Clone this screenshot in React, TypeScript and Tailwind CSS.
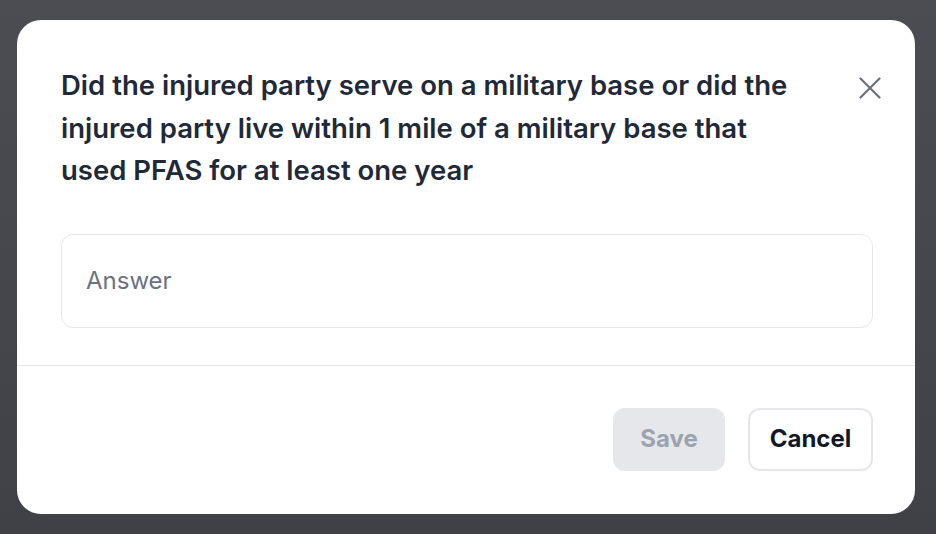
import { X } from "lucide-react";

export default function App() {
  return (
    <div
      className="flex h-[534px] w-[936px] items-start bg-gradient-to-b from-[#4b4d52] to-[#404146] pt-5 pl-[17px]"
      style={{ fontFamily: "Inter, 'Noto Sans', sans-serif" }}
    >
      <div className="w-[898px] overflow-hidden rounded-[24px] bg-white">
        <div className="pl-[44px] pr-[42px] pt-[44px] pb-[37px]">
          <div className="flex items-start justify-between">
            <h2 className="w-[740px] text-[27.5px] leading-[42.5px] font-semibold text-[#1f2937]">
              Did the injured party serve on a military base or did the injured party live within 1 mile of a
              military base that used PFAS for at least one year
            </h2>
            <button className="mt-[5px] mr-[-16px] text-[#6b7280]">
              <X className="h-[38px] w-[38px]" strokeWidth={1.4} />
            </button>
          </div>
          <div className="mt-[42px] flex h-[94px] items-center rounded-[12px] border border-[#e5e7eb] px-[24px]">
            <span className="text-[24px] text-[#6b7280]">Answer</span>
          </div>
        </div>
        <div className="flex justify-end gap-[23px] border-t border-[#e5e7eb] pr-[42px] pt-[42px] pb-[43px]">
          <button className="h-[63px] w-[112px] rounded-[12px] bg-[#e5e7eb] text-[24px] font-bold text-[#9ca3af]">
            Save
          </button>
          <button className="h-[63px] w-[125px] rounded-[12px] border-2 border-[#e5e7eb] text-[24px] font-bold text-[#111827]">
            Cancel
          </button>
        </div>
      </div>
    </div>
  );
}
